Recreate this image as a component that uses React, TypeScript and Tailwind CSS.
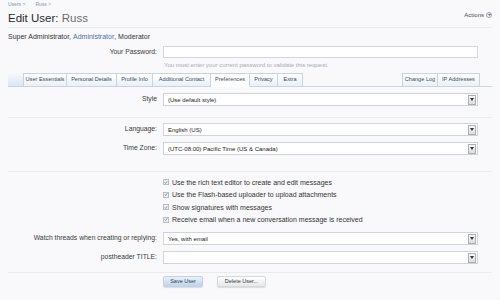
import React from "react";

function Arrow() {
  return (
    <span className="flex h-[10px] w-[8px] items-center justify-center border border-[#a9aeb8] bg-gradient-to-b from-[#fafafa] to-[#dcdcdc]">
      <svg width="4" height="3" viewBox="0 0 4 3">
        <path d="M0 0h4L2 3z" fill="#333" />
      </svg>
    </span>
  );
}

function Select({ value }: { value?: string }) {
  return (
    <div className="flex h-[13px] w-[315px] items-center border border-[#cfd3da] bg-white pl-[4px] pr-[1px]">
      <span className="flex-1 text-[6px] leading-none text-[#222]">{value}</span>
      <Arrow />
    </div>
  );
}

function Row({ label, children, className = "" }: { label: string; children: React.ReactNode; className?: string }) {
  return (
    <div className={"flex items-center " + className}>
      <div className="w-[149px] text-right text-[6.8px] leading-none text-[#3a3a3a]">{label}</div>
      <div className="ml-[6px]">{children}</div>
    </div>
  );
}

function Check({ text }: { text: string }) {
  return (
    <div className="flex h-[12.5px] items-center pl-[155px]">
      <span className="flex h-[6px] w-[6px] items-center justify-center border border-[#b9bec6] bg-[#eef0f3]">
        <svg width="5" height="5" viewBox="0 0 5 5">
          <path d="M1 2.6l1 1.1L4 1" stroke="#4b5d7a" strokeWidth="0.8" fill="none" />
        </svg>
      </span>
      <span className="ml-[3px] text-[7px] leading-none text-[#333]">{text}</span>
    </div>
  );
}

function Tab({ label, w, active = false }: { label: string; w: string; active?: boolean }) {
  return (
    <div
      className={
        "-mb-px flex h-[14px] shrink-0 items-center justify-center border border-l-0 border-[#c9d4e1] text-[5.6px] leading-none text-[#3c4a5e] first:border-l " +
        w +
        " " +
        (active ? "border-b-white bg-white" : "bg-gradient-to-b from-[#ffffff] to-[#eaf0f6]")
      }
    >
      {label}
    </div>
  );
}

export default function App() {
  return (
    <div className="h-[300px] w-[500px] overflow-hidden bg-[#f9f9fc] px-2 font-['Liberation_Sans',Arial,sans-serif] text-[#333]">
      {/* breadcrumb */}
      <div className="flex h-[9px] items-center gap-[10px] text-[5px] leading-none text-[#7f92b0]">
        <span>Users &gt;</span>
        <span>Russ &gt;</span>
      </div>
      {/* header */}
      <div className="flex h-[19px] items-start justify-between border-b border-[#e7eaf0]">
        <div className="mt-[2px] text-[11.5px] leading-[14px]">
          <span className="text-[#2b2b2b]">Edit User: </span>
          <span className="text-[#6d6d6d]">Russ</span>
        </div>
        <div className="mt-[3px] flex items-center gap-[2px] text-[6px] leading-none text-[#4a4a4a]">
          <span>Actions</span>
          <span className="flex h-[6px] w-[6px] items-center justify-center rounded-full border border-[#9aa0a8]">
            <svg width="3" height="2" viewBox="0 0 3 2">
              <path d="M0 0h3L1.5 2z" fill="#666" />
            </svg>
          </span>
        </div>
      </div>
      {/* roles */}
      <div className="flex h-[16px] items-center text-[7px] leading-none text-[#333]">
        <span>Super Administrator,&nbsp;</span>
        <span className="text-[#4a6fa5]">Administrator</span>
        <span>, Moderator</span>
      </div>
      {/* password */}
      <Row label="Your Password:" className="mt-[2px]">
        <div className="h-[12px] w-[315px] border border-[#d3d6dc] bg-white" />
      </Row>
      <div className="flex h-[13px] items-center pl-[156px] text-[6px] leading-none text-[#a6abb3]">
        You must enter your current password to validate this request.
      </div>
      {/* tabs */}
      <div className="mt-[2px] flex h-[14px] items-end border-b border-[#c9d4e1]">
        <div className="h-full w-[15px] bg-gradient-to-b from-transparent to-[#dbe6f2]" />
        <div className="flex items-end">
          <Tab label="User Essentials" w="w-[44px]" />
          <Tab label="Personal Details" w="w-[50px]" />
          <Tab label="Profile Info" w="w-[36px]" />
          <Tab label="Additional Contact" w="w-[58px]" />
          <Tab label="Preferences" w="w-[39px]" active />
          <Tab label="Privacy" w="w-[28px]" />
          <Tab label="Extra" w="w-[25px]" />
        </div>
        <div className="flex-1" />
        <div className="mr-[12px] flex items-end">
          <Tab label="Change Log" w="w-[36px]" />
          <Tab label="IP Addresses" w="w-[42px]" />
        </div>
      </div>
      {/* style */}
      <Row label="Style" className="mt-[6px]">
        <Select value="(Use default style)" />
      </Row>
      <div className="mt-[11px] h-px bg-[#e9ebf0]" />
      <Row label="Language:" className="mt-[5px]">
        <Select value="English (US)" />
      </Row>
      <Row label="Time Zone:" className="mt-[6px]">
        <Select value="(UTC-08:00) Pacific Time (US & Canada)" />
      </Row>
      <div className="mt-[16px] h-px bg-[#e9ebf0]" />
      <div className="mt-[4px]">
        <Check text="Use the rich text editor to create and edit messages" />
        <Check text="Use the Flash-based uploader to upload attachments" />
        <Check text="Show signatures with messages" />
        <Check text="Receive email when a new conversation message is received" />
      </div>
      <Row label="Watch threads when creating or replying:" className="mt-[6px]">
        <Select value="Yes, with email" />
      </Row>
      <Row label="postheader TITLE:" className="mt-[6px]">
        <Select value="" />
      </Row>
      <div className="mt-[8px] h-px bg-[#e9ebf0]" />
      <div className="mt-[3px] flex gap-[14px] pl-[155px]">
        <div className="flex h-[11px] w-[40px] items-center justify-center rounded-[2px] border border-[#c3d3e3] bg-gradient-to-b from-[#e8f1fa] to-[#bcd4ea] text-[5.5px] leading-none text-[#2d3f57] shadow-[0_1px_1px_rgba(0,0,0,0.12)]">
          Save User
        </div>
        <div className="flex h-[11px] w-[49px] items-center justify-center rounded-[2px] border border-[#d5d8dd] bg-gradient-to-b from-[#ffffff] to-[#e6e8eb] text-[5.5px] leading-none text-[#333] shadow-[0_1px_1px_rgba(0,0,0,0.12)]">
          Delete User...
        </div>
      </div>
    </div>
  );
}
